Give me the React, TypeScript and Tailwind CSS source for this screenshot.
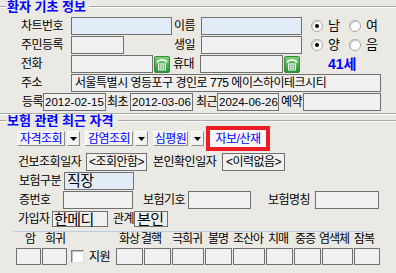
import React from "react";

function Phone() {
  return (
    <svg width="16" height="17" viewBox="0 0 16 17" className="ml-[1px] shrink-0">
      <defs>
        <linearGradient id="pg" x1="0" y1="0" x2="0" y2="1">
          <stop offset="0" stopColor="#7fd47a" />
          <stop offset="1" stopColor="#229030" />
        </linearGradient>
      </defs>
      <rect x="0.5" y="0.5" width="15" height="16" rx="1.5" fill="url(#pg)" stroke="#3a8a3a" />
      <path d="M2.5 6.5 C2.5 2.3 13.5 2.3 13.5 6.5 L11.2 6.5 L11.2 5.2 C9.2 4.5 6.8 4.5 4.8 5.2 L4.8 6.5 Z" fill="#fff" />
      <rect x="4" y="7.5" width="8" height="7" fill="#fff" />
      <rect x="5" y="8.5" width="1.5" height="1.2" fill="#2a9a35" />
      <rect x="7.25" y="8.5" width="1.5" height="1.2" fill="#2a9a35" />
      <rect x="9.5" y="8.5" width="1.5" height="1.2" fill="#2a9a35" />
      <rect x="5" y="10.5" width="1.5" height="1.2" fill="#2a9a35" />
      <rect x="7.25" y="10.5" width="1.5" height="1.2" fill="#2a9a35" />
      <rect x="9.5" y="10.5" width="1.5" height="1.2" fill="#2a9a35" />
      <rect x="5" y="12.5" width="1.5" height="1.2" fill="#2a9a35" />
      <rect x="7.25" y="12.5" width="1.5" height="1.2" fill="#2a9a35" />
      <rect x="9.5" y="12.5" width="1.5" height="1.2" fill="#2a9a35" />
    </svg>
  );
}

function Radio({ checked }: { checked?: boolean }) {
  return (
    <div className="w-[12px] h-[12px] rounded-full bg-white border border-[#a6a6a6] shadow-[inset_1px_1px_0_#d0d0d0] flex items-center justify-center shrink-0">
      {checked ? <div className="w-[4px] h-[4px] rounded-full bg-black" /> : null}
    </div>
  );
}

function Arrow() {
  return (
    <div className="w-[13px] h-[15px] bg-[#f3f3f3] border-t border-l border-t-white border-l-white border-b border-r border-b-[#8a8a8a] border-r-[#8a8a8a] flex items-center justify-center shrink-0">
      <svg width="7" height="4" viewBox="0 0 7 4">
        <path d="M0 0 L7 0 L3.5 4 Z" fill="#000" />
      </svg>
    </div>
  );
}

function Line() {
  return <div className="flex-1 h-[2px] border-t border-t-[#a8a8a8] border-b border-b-white" />;
}

export default function App() {
  return (
    <div className="w-[396px] h-[273px] bg-[#ebe9e3] overflow-hidden font-['Liberation_Sans','Noto_Sans_CJK_KR',sans-serif] text-[12px] leading-[14px] tracking-[-0.5px] text-black">
      {/* group 1 title */}
      <div className="h-[14px] flex items-center">
        <div className="w-[6px] h-[2px] border-t border-t-[#a8a8a8] border-b border-b-white" />
        <span className="ml-[1px] mr-[3px] text-[13px] leading-[14px] font-bold text-[#0000ff] tracking-[0px] whitespace-nowrap">환자 기초 정보</span>
        <Line />
      </div>

      {/* row 1 */}
      <div className="mt-[3px] h-[18px] flex items-center pl-[21px]">
        <span className="w-[50px] whitespace-nowrap">차트번호</span>
        <div className="w-[101px] h-[18px] border border-[#707070] bg-[#e2ecf8]" />
        <span className="ml-[2px] w-[27px] whitespace-nowrap">이름</span>
        <div className="w-[101px] h-[18px] border border-[#707070] bg-[#e2ecf8]" />
        <div className="ml-[9px]"><Radio checked /></div>
        <span className="ml-[5px] w-[12px] text-[13px]">남</span>
        <div className="ml-[9px]"><Radio /></div>
        <span className="ml-[5px] w-[12px] text-[13px]">여</span>
      </div>

      {/* row 2 */}
      <div className="mt-[1px] h-[18px] flex items-center pl-[21px]">
        <span className="w-[50px] whitespace-nowrap">주민등록</span>
        <div className="w-[53px] h-[18px] border border-[#707070] bg-[#f0f0f0]" />
        <span className="ml-[50px] w-[27px] whitespace-nowrap">생일</span>
        <div className="w-[101px] h-[18px] border border-[#707070] bg-[#f0f0f0] overflow-hidden pl-[3px]">
          <div className="-mt-[11px] text-[11px] leading-[12px] tracking-[0.5px] whitespace-nowrap">1983 01 01</div>
        </div>
        <div className="ml-[9px]"><Radio checked /></div>
        <span className="ml-[5px] w-[12px] text-[13px]">양</span>
        <div className="ml-[9px]"><Radio /></div>
        <span className="ml-[5px] w-[12px] text-[13px]">음</span>
      </div>

      {/* row 3 */}
      <div className="mt-[1px] h-[18px] flex items-center pl-[21px]">
        <span className="w-[50px] whitespace-nowrap">전화</span>
        <div className="w-[82px] h-[18px] border border-[#707070] bg-[#f0f0f0]" />
        <Phone />
        <span className="ml-[3px] w-[27px] whitespace-nowrap">휴대</span>
        <div className="w-[83px] h-[18px] border border-[#707070] bg-[#f0f0f0]" />
        <Phone />
        <span className="ml-[28px] text-[14px] font-bold text-[#0000ff] tracking-[0px] whitespace-nowrap">41세</span>
      </div>

      {/* row 4 */}
      <div className="mt-[1px] h-[18px] flex items-center pl-[21px]">
        <span className="w-[50px] whitespace-nowrap">주소</span>
        <div className="w-[310px] h-[18px] border border-[#707070] bg-[#f0f0f0] pl-[3px] flex items-center whitespace-nowrap text-[12px]">
          서울특별시 영등포구 경인로 775 에이스하이테크시티
        </div>
      </div>

      {/* row 5 */}
      <div className="mt-[1px] h-[18px] flex items-center pl-[22px]">
        <span className="w-[21px] whitespace-nowrap">등록</span>
        <div className="w-[63px] h-[18px] border border-[#707070] bg-[#f0f0f0] pl-[1px] flex items-center text-[11.5px] tracking-[0px]">2012-02-15</div>
        <span className="w-[24px] pl-[1px] whitespace-nowrap">최초</span>
        <div className="w-[63px] h-[18px] border border-[#707070] bg-[#f0f0f0] pl-[1px] flex items-center text-[11.5px] tracking-[0px]">2012-03-06</div>
        <span className="w-[24px] pl-[3px] whitespace-nowrap">최근</span>
        <div className="w-[62px] h-[18px] border border-[#707070] bg-[#f0f0f0] pl-[1px] flex items-center text-[11.5px] tracking-[0px]">2024-06-26</div>
        <span className="w-[24px] pl-[2px] whitespace-nowrap">예약</span>
        <div className="w-[78px] h-[18px] border border-[#707070] bg-[#f0f0f0]" />
      </div>

      {/* group separator */}
      <div className="mt-[2px] h-[2px] border-t border-t-[#a8a8a8] border-b border-b-white" />

      {/* group 2 title */}
      <div className="h-[11px] flex items-center">
        <div className="w-[6px] h-[2px] border-t border-t-[#a8a8a8] border-b border-b-white" />
        <span className="ml-[1px] mr-[4px] text-[13px] leading-[13px] font-bold text-[#0000ff] tracking-[0px] whitespace-nowrap">보험 관련 최근 자격</span>
        <Line />
      </div>

      {/* buttons row */}
      <div className="h-[25px] flex items-center pl-[17px]">
        <div className="w-[48px] h-[15px] bg-[#f5f5f5] border-t border-l border-t-white border-l-white border-b border-r border-b-[#8a8a8a] border-r-[#8a8a8a] flex items-center justify-center text-[#0000ff] whitespace-nowrap">자격조회</div>
        <div className="ml-[2px]"><Arrow /></div>
        <div className="ml-[5px] w-[48px] h-[15px] bg-[#f5f5f5] border-t border-l border-t-white border-l-white border-b border-r border-b-[#8a8a8a] border-r-[#8a8a8a] flex items-center justify-center text-[#0000ff] whitespace-nowrap">감염조회</div>
        <div className="ml-[2px]"><Arrow /></div>
        <div className="ml-[5px] w-[35px] h-[15px] bg-[#f5f5f5] border-t border-l border-t-white border-l-white border-b border-r border-b-[#8a8a8a] border-r-[#8a8a8a] flex items-center justify-center text-[#0000ff] whitespace-nowrap">심평원</div>
        <div className="ml-[3px]"><Arrow /></div>
        <div className="ml-[2px] w-[64px] h-[25px] border-[4px] border-[#ed1c24] bg-[#f7f7f7] flex items-center justify-center text-[#0000ff] whitespace-nowrap">자보/산재</div>
      </div>

      {/* 건보조회 row */}
      <div className="mt-[2px] h-[18px] flex items-center pl-[18px]">
        <span className="w-[68px] whitespace-nowrap">건보조회일자</span>
        <div className="w-[61px] h-[18px] border border-[#707070] bg-[#f0f0f0] flex items-center justify-center whitespace-nowrap">&lt;조회안함&gt;</div>
        <span className="ml-[6px] w-[69px] whitespace-nowrap">본인확인일자</span>
        <div className="w-[63px] h-[18px] border border-[#707070] bg-[#f0f0f0] flex items-center justify-center whitespace-nowrap">&lt;이력없음&gt;</div>
      </div>

      {/* 보험구분 */}
      <div className="mt-[1px] h-[18px] flex items-center pl-[19px]">
        <span className="w-[45px] whitespace-nowrap">보험구분</span>
        <div className="w-[70px] h-[18px] border border-[#707070] bg-[#e2ecf8] pl-[2px] flex items-center text-[15px] leading-[16px] whitespace-nowrap">직장</div>
      </div>

      {/* 증번호 */}
      <div className="mt-[1px] h-[18px] flex items-center pl-[19px]">
        <span className="w-[44px] whitespace-nowrap">증번호</span>
        <div className="w-[70px] h-[18px] border border-[#707070] bg-[#f0f0f0]" />
        <span className="ml-[10px] w-[45px] whitespace-nowrap">보험기호</span>
        <div className="w-[63px] h-[18px] border border-[#707070] bg-[#f0f0f0]" />
        <span className="ml-[17px] w-[47px] whitespace-nowrap">보험명칭</span>
        <div className="w-[64px] h-[18px] border border-[#707070] bg-[#f0f0f0]" />
      </div>

      {/* 가입자 */}
      <div className="mt-[2px] h-[16px] flex items-center pl-[18px]">
        <span className="w-[34px] whitespace-nowrap">가입자</span>
        <div className="w-[56px] h-[16px] border border-[#707070] bg-[#f0f0f0] pl-[1px] flex items-center text-[15px] leading-[15px] whitespace-nowrap">한메디</div>
        <span className="ml-[5px] w-[21px] whitespace-nowrap">관계</span>
        <div className="w-[34px] h-[16px] border border-[#707070] bg-[#f0f0f0] pl-[2px] flex items-center text-[15px] leading-[15px] whitespace-nowrap">본인</div>
      </div>

      {/* separator */}
      <div className="mt-[4px] ml-[13px] w-[359px] h-[1px] bg-[#bccfe2]" />

      {/* labels row */}
      <div className="h-[14px] flex items-center pl-[25px] whitespace-nowrap tracking-[-1px]">
        <span className="w-[20px]">암</span>
        <span className="w-[74px]">희귀</span>
        <span className="w-[22px]">화상</span>
        <span className="w-[31px]">결핵</span>
        <span className="w-[36px]">극희귀</span>
        <span className="w-[25px]">불명</span>
        <span className="w-[35px]">조산아</span>
        <span className="w-[27px]">치매</span>
        <span className="w-[24px]">중증</span>
        <span className="w-[35px]">염색체</span>
        <span>잠복</span>
      </div>

      {/* boxes row */}
      <div className="mt-[2px] h-[17px] flex items-center pl-[16px]">
        <div className="w-[25px] h-[17px] border border-[#707070] bg-[#f0f0f0]" />
        <div className="ml-[1px] w-[25px] h-[17px] border border-[#707070] bg-[#f0f0f0]" />
        <div className="ml-[4px] w-[13px] h-[13px] bg-white border border-t-[#808080] border-l-[#808080] border-r-[#e0e0e0] border-b-[#e0e0e0] shadow-[inset_1px_1px_0_#c0c0c0]" />
        <span className="ml-[5px] w-[27px] whitespace-nowrap">지원</span>
        <div className="w-[27px] h-[17px] border border-[#707070] bg-[#f0f0f0]" />
        <div className="ml-[1px] w-[27px] h-[17px] border border-[#707070] bg-[#f0f0f0]" />
        <div className="ml-[1px] w-[32px] h-[17px] border border-[#707070] bg-[#f0f0f0]" />
        <div className="ml-[1px] w-[27px] h-[17px] border border-[#707070] bg-[#f0f0f0]" />
        <div className="ml-[1px] w-[32px] h-[17px] border border-[#707070] bg-[#f0f0f0]" />
        <div className="ml-[1px] w-[27px] h-[17px] border border-[#707070] bg-[#f0f0f0]" />
        <div className="ml-[1px] w-[27px] h-[17px] border border-[#707070] bg-[#f0f0f0]" />
        <div className="ml-[1px] w-[31px] h-[17px] border border-[#707070] bg-[#f0f0f0]" />
        <div className="ml-[1px] w-[26px] h-[17px] border border-[#707070] bg-[#f0f0f0]" />
      </div>
    </div>
  );
}
